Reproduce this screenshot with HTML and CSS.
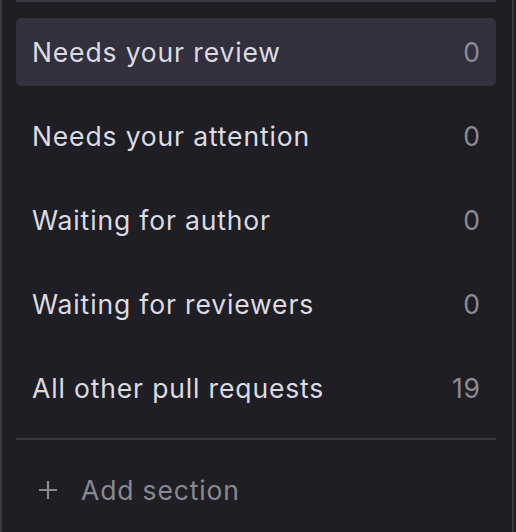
FILE: index.html
```html
<!DOCTYPE html>
<html>
<head>
<meta charset="utf-8">
<link rel="stylesheet" href="styles.css">
</head>
<body>
<div class="panel">
  <div class="top-bar"></div>
  <ul class="sections">
    <li class="row active"><span class="label">Needs your review</span><span class="count">0</span></li>
    <li class="row"><span class="label">Needs your attention</span><span class="count">0</span></li>
    <li class="row"><span class="label">Waiting for author</span><span class="count">0</span></li>
    <li class="row"><span class="label">Waiting for reviewers</span><span class="count">0</span></li>
    <li class="row"><span class="label">All other pull requests</span><span class="count">19</span></li>
  </ul>
  <div class="divider"></div>
  <div class="add-row">
    <svg class="plus" width="20" height="20" viewBox="0 0 20 20"><path d="M10 1V19M1 10H19" stroke="currentColor" stroke-width="2.2" fill="none"/></svg>
    <span class="add-label">Add section</span>
  </div>
</div>
</body>
</html>
```

FILE: styles.css
```css
html, body {
  margin: 0;
  padding: 0;
  background: #1f1e24;
}
body {
  width: 516px;
  height: 532px;
  overflow: hidden;
  font-family: Inter, "Noto Sans", sans-serif;
}
.panel {
  box-sizing: border-box;
  width: 514px;
  height: 532px;
  border-left: 2px solid #3b3a42;
  border-right: 2px solid #3b3a42;
  padding: 0 16px 0 14px;
}
.top-bar {
  height: 2px;
  background: #3b3a44;
}
.sections {
  list-style: none;
  margin: 16px 0 0;
  padding: 0;
  display: flex;
  flex-direction: column;
  gap: 16px;
}
.row {
  height: 68px;
  display: flex;
  align-items: center;
  justify-content: space-between;
  padding: 0 16px 0 16px;
  border-radius: 5px;
  font-size: 26.5px;
  letter-spacing: 0.85px;
  color: #dcdbe1;
}
.row.active {
  background: #31303c;
}
.count {
  color: #8c8b93;
  margin-right: -0.85px;
}
.divider {
  height: 2px;
  background: #3a3940;
  margin-top: 16px;
}
.add-row {
  height: 68px;
  margin-top: 16px;
  display: flex;
  align-items: center;
  padding-left: 22px;
  color: #8a8990;
  font-size: 26.5px;
  letter-spacing: 0.85px;
}
.plus {
  margin-right: 23px;
}
```
